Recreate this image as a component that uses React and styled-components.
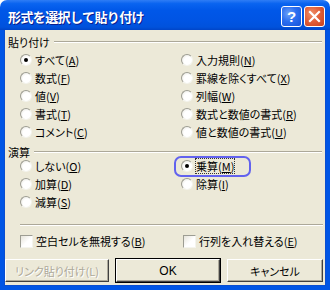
import React from 'react';
import styled, { createGlobalStyle } from 'styled-components';

const GlobalStyle = createGlobalStyle`
  html, body {
    margin: 0;
    padding: 0;
    background: #ffffff;
  }
  * {
    box-sizing: border-box;
  }
`

const font = `"Noto Sans CJK JP", "Noto Sans", sans-serif`

const Window = styled.div`
  width: 330px;
  height: 290px;
  display: flex;
  flex-direction: column;
  font-family: ${font};
  font-size: 11px;
  font-feature-settings: "palt" 1;
  color: #000;
`

const TitleBar = styled.div`
  height: 30px;
  flex: none;
  display: flex;
  align-items: center;
  justify-content: space-between;
  padding: 0 5px 0 8px;
  border-radius: 7px 7px 0 0;
  background: linear-gradient(
    #2f7df5 0%,
    #0a64f0 12%,
    #0057e8 35%,
    #0054e3 70%,
    #0052dc 90%,
    #0045c8 100%
  );
`

const Title = styled.span`
  color: #fff;
  font-weight: bold;
  font-size: 13px;
  letter-spacing: -0.6px;
  font-feature-settings: normal;
  text-shadow: 1px 1px 0 #0a1e8c;
  margin-top: 2px;
`

const Controls = styled.div`
  display: flex;
  gap: 2px;
  margin-top: 2px;
`

const CaptionButton = styled.div`
  width: 21px;
  height: 21px;
  border: 1px solid #fff;
  border-radius: 3px;
  display: flex;
  align-items: center;
  justify-content: center;
  color: #fff;
  font-family: "Liberation Sans", Arial, sans-serif;
  font-weight: bold;
  font-size: 15px;
  background: ${p => p.$close
    ? 'radial-gradient(circle at 35% 35%, #f0916a 0%, #e2603a 45%, #c8401c 100%)'
    : 'radial-gradient(circle at 35% 35%, #6fa2f7 0%, #2c6ff0 45%, #1652d8 100%)'};
`

const Body = styled.div`
  flex: 1;
  background: #ece9d8;
  border: 4px solid #0055e5;
  border-top: none;
  box-shadow: inset 1px 0 0 #0a4ed0, inset -1px 0 0 #0a4ed0, inset 0 -1px 0 #0a4ed0;
  display: flex;
  flex-direction: column;
  padding-top: 6px;
`

const GroupHeader = styled.div`
  display: flex;
  align-items: center;
  height: 12px;
  padding: 0 4px 0 4px;
  margin-top: ${p => p.$top || 0}px;
`

const GroupLabel = styled.span`
  line-height: 12px;
`

const Etched = styled.div`
  flex: 1;
  height: 2px;
  margin-left: 4px;
  border-top: 1px solid #aca899;
  border-bottom: 1px solid #fff;
`

const RadioGrid = styled.div`
  display: grid;
  grid-template-columns: 161px 1fr;
  grid-auto-flow: column;
  grid-template-rows: repeat(${p => p.$rows}, 18px);
  margin-left: 16px;
  margin-top: ${p => p.$top || 0}px;
`

const Option = styled.label`
  position: relative;
  display: flex;
  align-items: center;
  gap: 3px;
  line-height: 14px;
  white-space: nowrap;
`

const RadioCircle = styled.span`
  flex: none;
  width: 12px;
  height: 12px;
  border-radius: 50%;
  border: 1px solid;
  border-color: #9d9d93 #f4f4ee #f4f4ee #9d9d93;
  background: radial-gradient(circle at 60% 60%, #ffffff 0%, #ffffff 45%, #e2e0d6 100%);
  display: flex;
  align-items: center;
  justify-content: center;

  &::after {
    content: '';
    width: 4px;
    height: 4px;
    border-radius: 50%;
    background: ${p => (p.$checked ? '#000' : 'transparent')};
  }
`

const CheckBox = styled.span`
  flex: none;
  width: 13px;
  height: 13px;
  border: 1px solid;
  border-color: #9d9d93 #f4f4ee #f4f4ee #9d9d93;
  background: linear-gradient(135deg, #e6e4da 0%, #ffffff 55%);
`

const Key = styled.span`
  text-decoration: underline;
  text-underline-offset: 1px;
`

const FocusText = styled.span`
  outline: 1px dotted #333;
  outline-offset: 0px;
`

const FocusRing = styled.span`
  position: absolute;
  left: -7px;
  top: -1px;
  width: 77px;
  height: 21px;
  border: 2px solid #6262ee;
  border-radius: 7px;
  pointer-events: none;
`

const Separator = styled.div`
  height: 2px;
  margin: 13px 3px 0 16px;
  border-top: 1px solid #aca899;
  border-bottom: 1px solid #fff;
`

const CheckRow = styled.div`
  display: grid;
  grid-template-columns: 163px 1fr;
  height: 18px;
  margin: 6px 0 0 16px;
`

const ButtonRow = styled.div`
  display: flex;
  gap: 7px;
  margin: 9px 0 0 1px;
`

const Button = styled.div`
  width: ${p => p.$w}px;
  height: 23px;
  display: flex;
  align-items: center;
  justify-content: center;
  background: #ece9d8;
  border: 1px solid;
  border-color: #fff #404040 #404040 #fff;
  box-shadow: inset -1px -1px 0 #aca899;
  color: ${p => (p.$disabled ? '#aca899' : '#000')};
  text-shadow: ${p => (p.$disabled ? '1px 1px 0 #fff' : 'none')};
  outline: ${p => (p.$default ? '1px solid #000' : 'none')};
  outline-offset: 0;
  font-family: ${p => (p.$latin ? '"Liberation Sans", Arial, sans-serif' : font)};
  font-size: ${p => (p.$latin ? '12px' : '11px')};
`

const Radio = ({ label, k, checked, focus }) => (
  <Option>
    {focus && <FocusRing />}
    <RadioCircle $checked={checked} />
    {focus ? (
      <FocusText>{label}(<Key>{k}</Key>)</FocusText>
    ) : (
      <span>{label}(<Key>{k}</Key>)</span>
    )}
  </Option>
)

const paste = [
  ['すべて', 'A', true],
  ['数式', 'F'],
  ['値', 'V'],
  ['書式', 'T'],
  ['コメント', 'C'],
  ['入力規則', 'N'],
  ['罫線を除くすべて', 'X'],
  ['列幅', 'W'],
  ['数式と数値の書式', 'R'],
  ['値と数値の書式', 'U'],
]

const ops = [
  ['しない', 'O'],
  ['加算', 'D'],
  ['減算', 'S'],
  ['乗算', 'M', true, true],
  ['除算', 'I'],
  null,
]

const App = () => {
  return (
    <>
      <GlobalStyle />
      <Window>
        <TitleBar>
          <Title>形式を選択して貼り付け</Title>
          <Controls>
            <CaptionButton>?</CaptionButton>
            <CaptionButton $close>
              <svg width="13" height="13" viewBox="0 0 13 13">
                <path d="M2 2 L11 11 M11 2 L2 11" stroke="#fff" strokeWidth="2.2" strokeLinecap="square" />
              </svg>
            </CaptionButton>
          </Controls>
        </TitleBar>
        <Body>
          <GroupHeader>
            <GroupLabel>貼り付け</GroupLabel>
            <Etched />
          </GroupHeader>
          <RadioGrid $rows={5} $top={3}>
            {paste.map(([label, k, checked]) => (
              <Radio key={k} label={label} k={k} checked={checked} />
            ))}
          </RadioGrid>

          <GroupHeader $top={5}>
            <GroupLabel>演算</GroupLabel>
            <Etched />
          </GroupHeader>
          <RadioGrid $rows={3} $top={-1}>
            {ops.map((o, i) =>
              o ? <Radio key={o[1]} label={o[0]} k={o[1]} checked={o[2]} focus={o[3]} /> : <span key={i} />
            )}
          </RadioGrid>

          <Separator />
          <CheckRow>
            <Option>
              <CheckBox />
              <span>空白セルを無視する(<Key>B</Key>)</span>
            </Option>
            <Option>
              <CheckBox />
              <span>行列を入れ替える(<Key>E</Key>)</span>
            </Option>
          </CheckRow>

          <ButtonRow>
            <Button $w={104} $disabled>リンク貼り付け(L)</Button>
            <Button $w={104} $default $latin>OK</Button>
            <Button $w={96}>キャンセル</Button>
          </ButtonRow>
        </Body>
      </Window>
    </>
  )
}

export default App
